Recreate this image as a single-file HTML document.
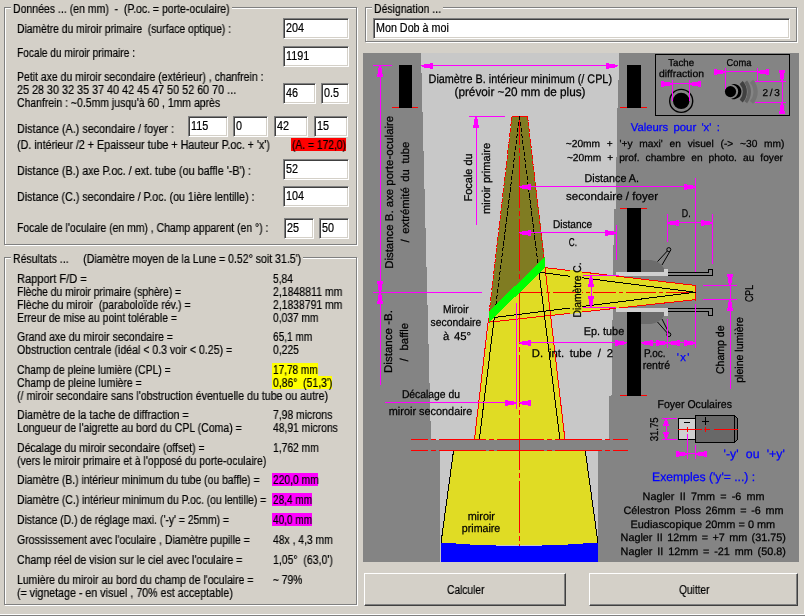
<!DOCTYPE html>
<html><head><meta charset="utf-8"><title>Newton</title>
<style>
html,body{margin:0;padding:0;}
body{width:805px;height:616px;background:#d4d0c8;position:relative;overflow:hidden;font-family:"Liberation Sans",sans-serif;font-size:12px;color:#000;}
.t{position:absolute;white-space:pre;line-height:13px;height:13px;}
.gb{position:absolute;border:1px solid #808080;box-shadow:1px 1px 0 #fff, inset 1px 1px 0 #fff;box-sizing:border-box;}
.gl{position:absolute;background:#d4d0c8;white-space:pre;line-height:13px;height:13px;padding:0 1px;}
.in{position:absolute;box-sizing:border-box;background:#fff;border:1px solid;border-color:#808080 #fff #fff #808080;box-shadow:inset 1px 1px 0 #404040, inset -1px -1px 0 #d4d0c8;height:21px;line-height:13px;padding:3px 0 0 2px;white-space:pre;overflow:hidden;}
.btn{position:absolute;box-sizing:border-box;border:1px solid;border-color:#fff #404040 #404040 #fff;box-shadow:inset -1px -1px 0 #808080;text-align:center;line-height:13px;}
.hl{position:absolute;height:13px;}
svg{position:absolute;left:0;top:0;}
.t,.in,svg{will-change:transform;}
.t,.in{-webkit-text-stroke:0.2px #000;}
svg text{font-family:"Liberation Sans",sans-serif;}
</style></head><body>

<div class="gb" style="left:4px;top:7px;width:353px;height:238px;"></div>
<div style="position:absolute;left:11px;top:3px;width:221px;height:13px;background:#d4d0c8;"></div>
<div class="t" style="left:13px;top:3px;transform:scaleX(0.8752);transform-origin:0 0;">Données ... (en mm)  -  (P.oc. = porte-oculaire)</div>
<div class="gb" style="left:4px;top:257px;width:353px;height:348px;"></div>
<div style="position:absolute;left:11px;top:253px;width:292px;height:13px;background:#d4d0c8;"></div>
<div class="t" style="left:13px;top:253px;transform:scaleX(0.8777);transform-origin:0 0;">Résultats ...     (Diamètre moyen de la Lune = 0.52° soit 31.5')</div>
<div class="gb" style="left:365px;top:7px;width:432px;height:35px;"></div>
<div style="position:absolute;left:372px;top:3px;width:71px;height:13px;background:#d4d0c8;"></div>
<div class="t" style="left:374px;top:3px;transform:scaleX(0.8737);transform-origin:0 0;">Désignation ...</div>
<div class="t" style="left:17px;top:23px;transform:scaleX(0.8604);transform-origin:0 0;">Diamètre du miroir primaire  (surface optique) :</div>
<div class="t" style="left:17px;top:47px;transform:scaleX(0.8466);transform-origin:0 0;">Focale du miroir primaire :</div>
<div class="t" style="left:17px;top:71px;transform:scaleX(0.8715);transform-origin:0 0;">Petit axe du miroir secondaire (extérieur) , chanfrein :</div>
<div class="t" style="left:17px;top:84px;transform:scaleX(0.8998);transform-origin:0 0;">25 28 30 32 35 37 40 42 45 47 50 52 60 70 ...</div>
<div class="t" style="left:17px;top:97px;transform:scaleX(0.8699);transform-origin:0 0;">Chanfrein : ~0.5mm jusqu'à 60 , 1mm après</div>
<div class="t" style="left:17px;top:123px;transform:scaleX(0.8987);transform-origin:0 0;">Distance (A.) secondaire / foyer :</div>
<div class="t" style="left:17px;top:139px;transform:scaleX(0.8919);transform-origin:0 0;">(D. intérieur /2 + Epaisseur tube + Hauteur P.oc. + 'x')</div>
<div class="t" style="left:17px;top:165px;transform:scaleX(0.8972);transform-origin:0 0;">Distance (B.) axe P.oc. / ext. tube (ou baffle '-B') :</div>
<div class="t" style="left:17px;top:191px;transform:scaleX(0.8908);transform-origin:0 0;">Distance (C.) secondaire / P.oc. (ou 1ière lentille) :</div>
<div class="t" style="left:17px;top:222px;transform:scaleX(0.8671);transform-origin:0 0;">Focale de l'oculaire (en mm) , Champ apparent (en °) :</div>
<div class="in" style="left:283px;top:18px;width:66px;height:21px;"><span style="display:inline-block;transform:scaleX(0.9000);transform-origin:0 0;">204</span></div>
<div class="in" style="left:283px;top:46px;width:66px;height:21px;"><span style="display:inline-block;transform:scaleX(0.9000);transform-origin:0 0;">1191</span></div>
<div class="in" style="left:283px;top:83px;width:33px;height:21px;"><span style="display:inline-block;transform:scaleX(0.9000);transform-origin:0 0;">46</span></div>
<div class="in" style="left:321px;top:83px;width:28px;height:21px;"><span style="display:inline-block;transform:scaleX(0.9000);transform-origin:0 0;">0.5</span></div>
<div class="in" style="left:188px;top:116px;width:40px;height:21px;"><span style="display:inline-block;transform:scaleX(0.9000);transform-origin:0 0;">115</span></div>
<div class="in" style="left:233px;top:116px;width:35px;height:21px;"><span style="display:inline-block;transform:scaleX(0.9000);transform-origin:0 0;">0</span></div>
<div class="in" style="left:274px;top:116px;width:34px;height:21px;"><span style="display:inline-block;transform:scaleX(0.9000);transform-origin:0 0;">42</span></div>
<div class="in" style="left:314px;top:116px;width:34px;height:21px;"><span style="display:inline-block;transform:scaleX(0.9000);transform-origin:0 0;">15</span></div>
<div class="in" style="left:283px;top:159px;width:66px;height:21px;"><span style="display:inline-block;transform:scaleX(0.9000);transform-origin:0 0;">52</span></div>
<div class="in" style="left:283px;top:186px;width:66px;height:21px;"><span style="display:inline-block;transform:scaleX(0.9000);transform-origin:0 0;">104</span></div>
<div class="in" style="left:284px;top:218px;width:30px;height:21px;"><span style="display:inline-block;transform:scaleX(0.9000);transform-origin:0 0;">25</span></div>
<div class="in" style="left:319px;top:218px;width:30px;height:21px;"><span style="display:inline-block;transform:scaleX(0.9000);transform-origin:0 0;">50</span></div>
<div class="in" style="left:373px;top:18px;width:417px;height:21px;"><span style="display:inline-block;transform:scaleX(0.8948);transform-origin:0 0;">Mon Dob à moi</span></div>
<div class="hl" style="left:291px;top:138px;width:55px;background:#ff0000;"></div>
<div class="t" style="left:292px;top:139px;transform:scaleX(0.8569);transform-origin:0 0;">(A. = 172,0)</div>
<div class="t" style="left:17px;top:273px;transform:scaleX(0.9209);transform-origin:0 0;">Rapport F/D =</div>
<div class="t" style="left:273px;top:273px;transform:scaleX(0.8482);transform-origin:0 0;">5,84</div>
<div class="t" style="left:17px;top:286px;transform:scaleX(0.8588);transform-origin:0 0;">Flèche du miroir primaire (sphère) =</div>
<div class="t" style="left:273px;top:286px;transform:scaleX(0.8757);transform-origin:0 0;">2,1848811 mm</div>
<div class="t" style="left:17px;top:299px;transform:scaleX(0.8824);transform-origin:0 0;">Flèche du miroir  (paraboloïde rév.) =</div>
<div class="t" style="left:273px;top:299px;transform:scaleX(0.8659);transform-origin:0 0;">2,1838791 mm</div>
<div class="t" style="left:17px;top:312px;transform:scaleX(0.8671);transform-origin:0 0;">Erreur de mise au point tolérable =</div>
<div class="t" style="left:273px;top:312px;transform:scaleX(0.8530);transform-origin:0 0;">0,037 mm</div>
<div class="t" style="left:17px;top:331px;transform:scaleX(0.8733);transform-origin:0 0;">Grand axe du miroir secondaire =</div>
<div class="t" style="left:273px;top:331px;transform:scaleX(0.8399);transform-origin:0 0;">65,1 mm</div>
<div class="t" style="left:17px;top:344px;transform:scaleX(0.8800);transform-origin:0 0;">Obstruction centrale (idéal &lt; 0.3 voir &lt; 0.25) =</div>
<div class="t" style="left:273px;top:344px;transform:scaleX(0.8629);transform-origin:0 0;">0,225</div>
<div class="t" style="left:17px;top:364px;transform:scaleX(0.8609);transform-origin:0 0;">Champ de pleine lumière (CPL) =</div>
<div class="hl" style="left:272px;top:363px;width:46px;background:#ffff00;"></div>
<div class="t" style="left:273px;top:364px;transform:scaleX(0.8380);transform-origin:0 0;">17,78 mm</div>
<div class="t" style="left:17px;top:377px;transform:scaleX(0.8668);transform-origin:0 0;">Champ de pleine lumière =</div>
<div class="hl" style="left:272px;top:376px;width:60px;background:#ffff00;"></div>
<div class="t" style="left:273px;top:377px;transform:scaleX(0.8665);transform-origin:0 0;">0,86°  (51,3')</div>
<div class="t" style="left:17px;top:390px;transform:scaleX(0.8856);transform-origin:0 0;">(/ miroir secondaire sans l'obstruction éventuelle du tube ou autre)</div>
<div class="t" style="left:17px;top:409px;transform:scaleX(0.8893);transform-origin:0 0;">Diamètre de la tache de diffraction =</div>
<div class="t" style="left:273px;top:409px;transform:scaleX(0.8633);transform-origin:0 0;">7,98 microns</div>
<div class="t" style="left:17px;top:422px;transform:scaleX(0.8771);transform-origin:0 0;">Longueur de l'aigrette au bord du CPL (Coma) =</div>
<div class="t" style="left:273px;top:422px;transform:scaleX(0.8599);transform-origin:0 0;">48,91 microns</div>
<div class="t" style="left:17px;top:442px;transform:scaleX(0.8786);transform-origin:0 0;">Décalage du miroir secondaire (offset) =</div>
<div class="t" style="left:273px;top:442px;transform:scaleX(0.8586);transform-origin:0 0;">1,762 mm</div>
<div class="t" style="left:17px;top:455px;transform:scaleX(0.8664);transform-origin:0 0;">(vers le miroir primaire et à l'opposé du porte-oculaire)</div>
<div class="t" style="left:17px;top:474px;transform:scaleX(0.8634);transform-origin:0 0;">Diamètre (B.) intérieur minimum du tube (ou baffle) =</div>
<div class="hl" style="left:272px;top:473px;width:46px;background:#ff00ff;"></div>
<div class="t" style="left:273px;top:474px;transform:scaleX(0.8586);transform-origin:0 0;">220,0 mm</div>
<div class="t" style="left:17px;top:494px;transform:scaleX(0.8630);transform-origin:0 0;">Diamètre (C.) intérieur minimum du P.oc. (ou lentille) =</div>
<div class="hl" style="left:272px;top:493px;width:40px;background:#ff00ff;"></div>
<div class="t" style="left:273px;top:494px;transform:scaleX(0.8356);transform-origin:0 0;">28,4 mm</div>
<div class="t" style="left:17px;top:514px;transform:scaleX(0.8641);transform-origin:0 0;">Distance (D.) de réglage maxi. ('-y' = 25mm) =</div>
<div class="hl" style="left:272px;top:513px;width:40px;background:#ff00ff;"></div>
<div class="t" style="left:273px;top:514px;transform:scaleX(0.8356);transform-origin:0 0;">40,0 mm</div>
<div class="t" style="left:17px;top:534px;transform:scaleX(0.8750);transform-origin:0 0;">Grossissement avec l'oculaire , Diamètre pupille =</div>
<div class="t" style="left:273px;top:534px;transform:scaleX(0.8626);transform-origin:0 0;">48x , 4,3 mm</div>
<div class="t" style="left:17px;top:554px;transform:scaleX(0.8802);transform-origin:0 0;">Champ réel de vision sur le ciel avec l'oculaire =</div>
<div class="t" style="left:273px;top:554px;transform:scaleX(0.8738);transform-origin:0 0;">1,05°  (63,0')</div>
<div class="t" style="left:17px;top:574px;transform:scaleX(0.8731);transform-origin:0 0;">Lumière du miroir au bord du champ de l'oculaire =</div>
<div class="t" style="left:273px;top:574px;transform:scaleX(0.8528);transform-origin:0 0;">~ 79%</div>
<div class="t" style="left:17px;top:587px;transform:scaleX(0.8874);transform-origin:0 0;">(= vignetage - en visuel , 70% est acceptable)</div>
<div class="btn" style="left:364px;top:573px;width:202px;height:33px;"></div>
<div class="btn" style="left:589px;top:573px;width:209px;height:33px;"></div>
<div class="t" style="left:446.5px;top:584px;transform:scaleX(0.8517);transform-origin:0 0;">Calculer</div>
<div class="t" style="left:678.5px;top:584px;transform:scaleX(0.8472);transform-origin:0 0;">Quitter</div>
<div style="position:absolute;left:0;top:614px;width:805px;height:1px;background:#fff;"></div>
<div style="position:absolute;left:804px;top:0;width:1px;height:615px;background:#fff;"></div>
<div style="position:absolute;left:0;top:615px;width:805px;height:1px;background:#808080;"></div>
<svg width="805" height="616" viewBox="0 0 805 616" shape-rendering="crispEdges" text-rendering="geometricPrecision">
<rect x="363" y="53" width="436" height="509" fill="#848484"/>
<polygon points="421,53 619,53 618,107.5 617,107.5 616,208.5 614,208.5 611.5,395.5 609,395.5 608.5,440 431,440" fill="#c8c8c8"/>
<rect x="440" y="451" width="158" height="111" fill="#c8c8c8"/>
<polygon points="512,116 527.5,116 544.7,258 489.3,312.5" fill="#807c22"/>
<polygon points="489,321.5 545,266 565,440 474.5,440" fill="#e0dc24"/>
<polygon points="545,267.6 696,285.5 696,300 488.7,322.5 540,270" fill="#e0dc24"/>
<polygon points="453.5,451 585.3,451 598,545 441,545" fill="#e0dc24"/>
<path d="M441,542.5 Q519.5,549.5 598,542.5 L598,562 L441,562 Z" fill="#0000ff"/>
<line x1="512" y1="116.5" x2="527.5" y2="116.5" stroke="#ff0000" stroke-width="1"/>
<line x1="511.883950617284" y1="117" x2="489.13827160493827" y2="313" stroke="#ff0000" stroke-width="1" stroke-dasharray="4 1.5"/>
<line x1="488.558024691358" y1="318" x2="474.516049382716" y2="439" stroke="#ff0000" stroke-width="1"/>
<line x1="527.6157407407408" y1="117" x2="544.050925925926" y2="259" stroke="#ff0000" stroke-width="1" stroke-dasharray="4 1.5"/>
<line x1="544.3981481481482" y1="262" x2="564.8842592592592" y2="439" stroke="#ff0000" stroke-width="1"/>
<line x1="545" y1="267.6" x2="695.7" y2="285.5" stroke="#ff0000" stroke-width="1"/>
<line x1="488.7" y1="322.2" x2="695.7" y2="299.6" stroke="#ff0000" stroke-width="1"/>
<line x1="695.5" y1="285" x2="695.5" y2="300.5" stroke="#ff0000" stroke-width="1"/>
<line x1="519.5" y1="117" x2="519.5" y2="292" stroke="#ff0000" stroke-width="1" stroke-dasharray="28 3 5 3 52 3 5 3 52 3 5 3 52"/>
<line x1="519.5" y1="292" x2="519.5" y2="546" stroke="#ff0000" stroke-width="1" stroke-dasharray="52 3 5 3"/>
<line x1="519.5" y1="292.5" x2="696" y2="292.5" stroke="#ff0000" stroke-width="1" stroke-dasharray="23 3 4 3 30 3 4 3"/>
<line x1="519.5" y1="116" x2="494.3" y2="317.5" stroke="#000000" stroke-width="1" stroke-dasharray="4.5 1.5"/>
<line x1="519.5" y1="116" x2="538.6" y2="269" stroke="#000000" stroke-width="1" stroke-dasharray="4.5 1.5"/>
<line x1="494.3" y1="317.5" x2="479.4" y2="439" stroke="#000000" stroke-width="1"/>
<line x1="538.6" y1="269" x2="559.9" y2="439" stroke="#000000" stroke-width="1"/>
<line x1="539.3" y1="272.3" x2="695.7" y2="292.3" stroke="#000000" stroke-width="1"/>
<line x1="494.3" y1="317.5" x2="695.7" y2="292.2" stroke="#000000" stroke-width="1"/>
<line x1="453.5" y1="451" x2="441" y2="543" stroke="#000000" stroke-width="1"/>
<line x1="585.3" y1="451" x2="598" y2="543" stroke="#000000" stroke-width="1"/>
<polygon points="570,270.1 582.3,271.5 582.3,312.5 570,313.8" fill="#e0dc24"/>
<line x1="570" y1="292.5" x2="580" y2="292.5" stroke="#ff0000" stroke-width="1"/>
<line x1="411" y1="439.5" x2="628" y2="439.5" stroke="#ff0000" stroke-width="1" stroke-dasharray="17 3 5 3 47 3 5 3 47 3 5 3 47 3 5 3 15"/>
<line x1="411" y1="450.5" x2="628" y2="450.5" stroke="#ff0000" stroke-width="1" stroke-dasharray="17 3 5 3 47 3 5 3 47 3 5 3 47 3 5 3 15"/>
<polygon points="489.3,311.2 544.6,257 545.3,267.3 489,322.5" fill="#00ff00"/>
<line x1="392" y1="107.5" x2="418" y2="107.5" stroke="#ff0000" stroke-width="1"/>
<rect x="399" y="65" width="13" height="43" fill="#000000"/>
<line x1="620" y1="107.5" x2="647" y2="107.5" stroke="#ff0000" stroke-width="1"/>
<rect x="627" y="65" width="14" height="43" fill="#000000"/>
<line x1="620" y1="208.5" x2="647" y2="208.5" stroke="#ff0000" stroke-width="1"/>
<rect x="627" y="208" width="14" height="64" fill="#000000"/>
<line x1="620" y1="395.5" x2="647" y2="395.5" stroke="#ff0000" stroke-width="1"/>
<rect x="627" y="312" width="14" height="84" fill="#000000"/>
<path d="M641,260 H651 Q660,261 664.5,269 V272 H641 Z" fill="#6c6c6c" shape-rendering="auto"/>
<path d="M641,324 H651 Q660,323 664.5,315 V312 H641 Z" fill="#6c6c6c" shape-rendering="auto"/>
<rect x="616" y="272" width="52" height="4" fill="#d0d0d0"/>
<rect x="664" y="269" width="4" height="7" fill="#d0d0d0"/>
<rect x="616" y="308" width="52" height="4" fill="#d0d0d0"/>
<rect x="664" y="308" width="4" height="8" fill="#d0d0d0"/>
<path d="M668,272.5 H708.5 V269.5 H712.5 V275.5 H668" fill="none" stroke="#000000"/>
<path d="M668,311.5 H708.5 V315.5 H712.5 V308.5 H668" fill="none" stroke="#000000"/>
<g shape-rendering="auto" fill="none" stroke="#000000" stroke-width="1">
<circle cx="668.8" cy="249.6" r="2"/><line x1="667.3" y1="251" x2="657.5" y2="261.6"/><line x1="669.8" y1="251.6" x2="662" y2="265"/>
<circle cx="668.8" cy="334.6" r="2"/><line x1="667.3" y1="333" x2="657.5" y2="322"/><line x1="668.6" y1="332.3" x2="662" y2="319"/>
</g>
<line x1="373" y1="65.5" x2="392" y2="65.5" stroke="#ff00ff" stroke-width="1"/>
<line x1="380.5" y1="65" x2="380.5" y2="385" stroke="#ff00ff" stroke-width="1"/>
<path d="M379,66h2v2h-2zM378,68h4v6h-4zM377,74h6v3h-6z" fill="#ff00ff"/>
<line x1="373" y1="292.5" x2="482" y2="292.5" stroke="#ff00ff" stroke-width="1"/>
<path d="M379,290h2v2h-2zM378,284h4v6h-4zM377,281h6v3h-6z" fill="#ff00ff"/>
<path d="M379,293h2v2h-2zM378,295h4v6h-4zM377,301h6v3h-6z" fill="#ff00ff"/>
<line x1="421" y1="65.5" x2="618" y2="65.5" stroke="#ff00ff" stroke-width="1"/>
<path d="M422,65h2v2h-2zM424,64h6v4h-6zM430,63h3v6h-3z" fill="#ff00ff"/>
<path d="M615,65h2v2h-2zM609,64h6v4h-6zM606,63h3v6h-3z" fill="#ff00ff"/>
<line x1="469" y1="116.5" x2="505" y2="116.5" stroke="#ff00ff" stroke-width="1"/>
<line x1="476.5" y1="116" x2="476.5" y2="225" stroke="#ff00ff" stroke-width="1"/>
<path d="M475,117h2v2h-2zM474,119h4v6h-4zM473,125h6v3h-6z" fill="#ff00ff"/>
<line x1="519" y1="186.5" x2="695" y2="186.5" stroke="#ff00ff" stroke-width="1"/>
<path d="M520,186h2v2h-2zM522,185h6v4h-6zM528,184h3v6h-3z" fill="#ff00ff"/>
<path d="M693,186h2v2h-2zM687,185h6v4h-6zM684,184h3v6h-3z" fill="#ff00ff"/>
<line x1="695.5" y1="178" x2="695.5" y2="272" stroke="#ff00ff" stroke-width="1"/>
<line x1="695.5" y1="304" x2="695.5" y2="348" stroke="#ff00ff" stroke-width="1"/>
<line x1="519" y1="232.5" x2="616" y2="232.5" stroke="#ff00ff" stroke-width="1"/>
<path d="M520,232h2v2h-2zM522,231h6v4h-6zM528,230h3v6h-3z" fill="#ff00ff"/>
<path d="M614,232h2v2h-2zM608,231h6v4h-6zM605,230h3v6h-3z" fill="#ff00ff"/>
<line x1="616.5" y1="225" x2="616.5" y2="260" stroke="#ff00ff" stroke-width="1"/>
<line x1="667" y1="222.5" x2="713" y2="222.5" stroke="#ff00ff" stroke-width="1"/>
<path d="M668,222h2v2h-2zM670,221h6v4h-6zM676,220h3v6h-3z" fill="#ff00ff"/>
<path d="M710,222h2v2h-2zM704,221h6v4h-6zM701,220h3v6h-3z" fill="#ff00ff"/>
<line x1="667.5" y1="214" x2="667.5" y2="242" stroke="#ff00ff" stroke-width="1"/>
<line x1="712.5" y1="214" x2="712.5" y2="264" stroke="#ff00ff" stroke-width="1"/>
<line x1="591.5" y1="275" x2="591.5" y2="308" stroke="#ff00ff" stroke-width="1"/>
<line x1="583" y1="275.5" x2="619" y2="275.5" stroke="#ff00ff" stroke-width="1"/>
<line x1="583" y1="307.5" x2="616" y2="307.5" stroke="#ff00ff" stroke-width="1"/>
<path d="M590,276h2v2h-2zM589,278h4v6h-4zM588,284h6v3h-6z" fill="#ff00ff"/>
<path d="M590,305h2v2h-2zM589,299h4v6h-4zM588,296h6v3h-6z" fill="#ff00ff"/>
<line x1="519" y1="342.5" x2="627" y2="342.5" stroke="#ff00ff" stroke-width="1"/>
<path d="M520,342h2v2h-2zM522,341h6v4h-6zM528,340h3v6h-3z" fill="#ff00ff"/>
<path d="M624,342h2v2h-2zM618,341h6v4h-6zM615,340h3v6h-3z" fill="#ff00ff"/>
<line x1="516.5" y1="303" x2="516.5" y2="409" stroke="#ff00ff" stroke-width="1"/>
<line x1="641" y1="342.5" x2="696" y2="342.5" stroke="#ff00ff" stroke-width="1"/>
<path d="M642,342h2v2h-2zM644,341h6v4h-6zM650,340h3v6h-3z" fill="#ff00ff"/>
<path d="M665,342h2v2h-2zM659,341h6v4h-6zM656,340h3v6h-3z" fill="#ff00ff"/>
<path d="M669,342h2v2h-2zM671,341h6v4h-6zM677,340h3v6h-3z" fill="#ff00ff"/>
<path d="M693,342h2v2h-2zM687,341h6v4h-6zM684,340h3v6h-3z" fill="#ff00ff"/>
<line x1="667.5" y1="319" x2="667.5" y2="348" stroke="#ff00ff" stroke-width="1"/>
<line x1="385" y1="402.5" x2="517" y2="402.5" stroke="#ff00ff" stroke-width="1"/>
<path d="M514,402h2v2h-2zM508,401h6v4h-6zM505,400h3v6h-3z" fill="#ff00ff"/>
<path d="M520,402h2v2h-2zM522,401h6v4h-6zM528,400h3v6h-3z" fill="#ff00ff"/>
<line x1="519" y1="402.5" x2="530" y2="402.5" stroke="#ff00ff" stroke-width="1"/>
<line x1="703" y1="285.5" x2="737" y2="285.5" stroke="#ff00ff" stroke-width="1"/>
<line x1="703" y1="299.5" x2="737" y2="299.5" stroke="#ff00ff" stroke-width="1"/>
<line x1="730.5" y1="274" x2="730.5" y2="389" stroke="#ff00ff" stroke-width="1"/>
<path d="M729,283h2v2h-2zM728,277h4v6h-4zM727,274h6v3h-6z" fill="#ff00ff"/>
<path d="M729,300h2v2h-2zM728,302h4v6h-4zM727,308h6v3h-6z" fill="#ff00ff"/>
<rect x="655.5" y="54.5" width="134" height="61" fill="none" stroke="#000000"/>
<g shape-rendering="auto">
<circle cx="681.2" cy="100.9" r="11.5" fill="none" stroke="#000000" stroke-width="1.4"/><circle cx="681.2" cy="100.9" r="8.2" fill="#000000"/>
<path d="M751.50,81.20 A15.75,15.75 0 0 1 751.50,102.40" fill="none" stroke="#747474" stroke-width="4.3"/>
<path d="M745.80,81.40 A17.20,17.20 0 0 1 745.80,102.20" fill="none" stroke="#626262" stroke-width="3.3"/>
<path d="M741.20,82.50 A13.67,13.67 0 0 1 741.20,101.10" fill="none" stroke="#404040" stroke-width="4.1"/>
<path d="M731.1,84.5 A7.6,7.6 0 1 1 731.1,98.7 A7.1,7.1 0 0 0 731.1,84.5 Z" fill="#000000"/>
<circle cx="730.5" cy="91.6" r="5.6" fill="#000000"/>
</g>
<line x1="662" y1="83.5" x2="701" y2="83.5" stroke="#ff00ff" stroke-width="1"/>
<line x1="672.5" y1="80" x2="672.5" y2="101" stroke="#ff00ff" stroke-width="1"/>
<line x1="689.5" y1="80" x2="689.5" y2="101" stroke="#ff00ff" stroke-width="1"/>
<path d="M670,83h2v2h-2zM664,82h6v4h-6zM661,81h3v6h-3z" fill="#ff00ff"/>
<path d="M690,83h2v2h-2zM692,82h6v4h-6zM698,81h3v6h-3z" fill="#ff00ff"/>
<line x1="715" y1="71.5" x2="768" y2="71.5" stroke="#ff00ff" stroke-width="1"/>
<line x1="725.5" y1="68" x2="725.5" y2="89" stroke="#ff00ff" stroke-width="1"/>
<line x1="757.5" y1="68" x2="757.5" y2="81" stroke="#ff00ff" stroke-width="1"/>
<path d="M723,71h2v2h-2zM717,70h6v4h-6zM714,69h3v6h-3z" fill="#ff00ff"/>
<path d="M758,71h2v2h-2zM760,70h6v4h-6zM766,69h3v6h-3z" fill="#ff00ff"/>
<line x1="755" y1="81.5" x2="786" y2="81.5" stroke="#ff00ff" stroke-width="1"/>
<line x1="755" y1="102.5" x2="786" y2="102.5" stroke="#ff00ff" stroke-width="1"/>
<line x1="782.5" y1="70" x2="782.5" y2="113" stroke="#ff00ff" stroke-width="1"/>
<path d="M781,79h2v2h-2zM780,73h4v6h-4zM779,70h6v3h-6z" fill="#ff00ff"/>
<path d="M781,103h2v2h-2zM780,105h4v6h-4zM779,111h6v3h-6z" fill="#ff00ff"/>
<rect x="678.5" y="418.5" width="17" height="21" fill="#d0d0d0" stroke="#000000"/>
<path d="M695.5,415.5 H734.5 L737.5,418.5 V439.5 L734.5,442.5 H695.5 Z" fill="#686868" stroke="#000000"/>
<line x1="734.5" y1="416" x2="734.5" y2="442" stroke="#000000" stroke-width="1"/>
<line x1="678" y1="429.5" x2="702" y2="429.5" stroke="#ff0000" stroke-width="1"/>
<line x1="704" y1="429.5" x2="710" y2="429.5" stroke="#ff0000" stroke-width="1"/>
<line x1="714" y1="429.5" x2="738" y2="429.5" stroke="#ff0000" stroke-width="1"/>
<line x1="687.5" y1="427" x2="687.5" y2="432" stroke="#ff0000" stroke-width="1"/>
<line x1="705.5" y1="427" x2="705.5" y2="432" stroke="#ff0000" stroke-width="1"/>
<line x1="662" y1="418.5" x2="677" y2="418.5" stroke="#ff00ff" stroke-width="1"/>
<line x1="662" y1="439.5" x2="677" y2="439.5" stroke="#ff00ff" stroke-width="1"/>
<line x1="666.5" y1="418" x2="666.5" y2="439" stroke="#ff00ff" stroke-width="1"/>
<path d="M665,419h2v2h-2zM664,421h4v3h-4zM663,424h6v2h-6z" fill="#ff00ff"/>
<path d="M665,437h2v2h-2zM664,434h4v3h-4zM663,432h6v2h-6z" fill="#ff00ff"/>
<line x1="687.5" y1="434" x2="687.5" y2="459" stroke="#ff00ff" stroke-width="1"/>
<line x1="695.5" y1="445" x2="695.5" y2="459" stroke="#ff00ff" stroke-width="1"/>
<line x1="676" y1="453.5" x2="707" y2="453.5" stroke="#ff00ff" stroke-width="1"/>
<path d="M685,453h2v2h-2zM679,452h6v4h-6zM676,451h3v6h-3z" fill="#ff00ff"/>
<path d="M696,453h2v2h-2zM698,452h6v4h-6zM704,451h3v6h-3z" fill="#ff00ff"/>
<line x1="684" y1="422.5" x2="690" y2="422.5" stroke="#000000" stroke-width="1"/>
<line x1="702" y1="421.5" x2="709" y2="421.5" stroke="#000000" stroke-width="1"/>
<line x1="705.5" y1="417" x2="705.5" y2="425" stroke="#000000" stroke-width="1"/>
<g shape-rendering="auto">
<text x="428.6" y="82.8" font-size="12.4" fill="#000000" stroke="#000000" stroke-width="0.25" textLength="183.4" lengthAdjust="spacingAndGlyphs" xml:space="preserve">Diamètre B. intérieur minimum (/ CPL)</text>
<text x="454.5" y="95.8" font-size="12.4" fill="#000000" stroke="#000000" stroke-width="0.25" textLength="131.0" lengthAdjust="spacingAndGlyphs" xml:space="preserve">(prévoir ~20 mm de plus)</text>
<text x="630.8" y="130.5" font-size="11.3" fill="#0000ff" stroke="#0000ff" stroke-width="0.25" style="word-spacing:2.13px" textLength="89.0" lengthAdjust="spacingAndGlyphs" xml:space="preserve">Valeurs pour 'x' :</text>
<text x="565.8" y="147.2" font-size="10.2" fill="#000000" stroke="#000000" stroke-width="0.25" style="word-spacing:3.93px" textLength="218.7" lengthAdjust="spacingAndGlyphs" xml:space="preserve">~20mm + '+y maxi' en visuel (-&gt; ~30 mm)</text>
<text x="566.9" y="161" font-size="10.2" fill="#000000" stroke="#000000" stroke-width="0.25" style="word-spacing:3.17px" textLength="216.1" lengthAdjust="spacingAndGlyphs" xml:space="preserve">~20mm + prof. chambre en photo. au foyer</text>
<text x="584.6" y="181.5" font-size="11.3" fill="#000000" stroke="#000000" stroke-width="0.25" textLength="54.4" lengthAdjust="spacingAndGlyphs" xml:space="preserve">Distance A.</text>
<text x="566" y="199.6" font-size="11.3" fill="#000000" stroke="#000000" stroke-width="0.25" textLength="92.0" lengthAdjust="spacingAndGlyphs" xml:space="preserve">secondaire / foyer</text>
<text x="552.9" y="228" font-size="11.3" fill="#000000" stroke="#000000" stroke-width="0.25" textLength="39.3" lengthAdjust="spacingAndGlyphs" xml:space="preserve">Distance</text>
<text x="568.8" y="245.7" font-size="11.3" fill="#000000" stroke="#000000" stroke-width="0.25" textLength="8.2" lengthAdjust="spacingAndGlyphs" xml:space="preserve">C.</text>
<text x="681.8" y="217" font-size="11.3" fill="#000000" stroke="#000000" stroke-width="0.25" textLength="8.8" lengthAdjust="spacingAndGlyphs" xml:space="preserve">D.</text>
<text x="443" y="312.9" font-size="11.3" fill="#000000" stroke="#000000" stroke-width="0.25" textLength="25.6" lengthAdjust="spacingAndGlyphs" xml:space="preserve">Miroir</text>
<text x="430.6" y="326.3" font-size="11.3" fill="#000000" stroke="#000000" stroke-width="0.25" textLength="50.7" lengthAdjust="spacingAndGlyphs" xml:space="preserve">secondaire</text>
<text x="443" y="339.5" font-size="11.3" fill="#000000" stroke="#000000" stroke-width="0.25" style="word-spacing:1.49px" textLength="28.0" lengthAdjust="spacingAndGlyphs" xml:space="preserve">à 45°</text>
<text x="583.7" y="335.2" font-size="11.3" fill="#000000" stroke="#000000" stroke-width="0.25" textLength="40.5" lengthAdjust="spacingAndGlyphs" xml:space="preserve">Ep. tube</text>
<text x="531.8" y="356.7" font-size="11.3" fill="#000000" stroke="#000000" stroke-width="0.25" style="word-spacing:2.71px" textLength="81.2" lengthAdjust="spacingAndGlyphs" xml:space="preserve">D. int. tube / 2</text>
<text x="644" y="357.3" font-size="11.3" fill="#000000" stroke="#000000" stroke-width="0.25" textLength="21.5" lengthAdjust="spacingAndGlyphs" xml:space="preserve">P.oc.</text>
<text x="642.7" y="369.4" font-size="11.3" fill="#000000" stroke="#000000" stroke-width="0.25" textLength="27.5" lengthAdjust="spacingAndGlyphs" xml:space="preserve">rentré</text>
<text x="676.7" y="360.6" font-size="11.3" fill="#0000ff" stroke="#0000ff" stroke-width="0.25" textLength="12.7" lengthAdjust="spacing" xml:space="preserve">'x'</text>
<text x="401.9" y="397.6" font-size="11.3" fill="#000000" stroke="#000000" stroke-width="0.25" textLength="58.1" lengthAdjust="spacingAndGlyphs" xml:space="preserve">Décalage du</text>
<text x="388.8" y="414.8" font-size="11.3" fill="#000000" stroke="#000000" stroke-width="0.25" textLength="83.5" lengthAdjust="spacingAndGlyphs" xml:space="preserve">miroir secondaire</text>
<text x="467.8" y="519.7" font-size="11.3" fill="#000000" stroke="#000000" stroke-width="0.25" textLength="27.2" lengthAdjust="spacingAndGlyphs" xml:space="preserve">miroir</text>
<text x="461.8" y="532" font-size="11.3" fill="#000000" stroke="#000000" stroke-width="0.25" textLength="38.5" lengthAdjust="spacingAndGlyphs" xml:space="preserve">primaire</text>
<text x="657.5" y="407.9" font-size="11.3" fill="#000000" stroke="#000000" stroke-width="0.25" textLength="74.5" lengthAdjust="spacingAndGlyphs" xml:space="preserve">Foyer Oculaires</text>
<text x="723.6" y="457.7" font-size="12.3" fill="#0000ff" stroke="#0000ff" stroke-width="0.25" style="word-spacing:3.86px" textLength="61.2" lengthAdjust="spacingAndGlyphs" xml:space="preserve">'-y' ou '+y'</text>
<text x="652" y="480.6" font-size="12.3" fill="#0000ff" stroke="#0000ff" stroke-width="0.25" textLength="103.2" lengthAdjust="spacingAndGlyphs" xml:space="preserve">Exemples ('y'= ...) :</text>
<text x="642.6" y="500" font-size="10.8" fill="#000000" stroke="#000000" stroke-width="0.25" style="word-spacing:2.26px" textLength="122.0" lengthAdjust="spacingAndGlyphs" xml:space="preserve">Nagler II 7mm = -6 mm</text>
<text x="623.5" y="513.7" font-size="10.8" fill="#000000" stroke="#000000" stroke-width="0.25" style="word-spacing:1.69px" textLength="160.0" lengthAdjust="spacingAndGlyphs" xml:space="preserve">Célestron Ploss 26mm = -6 mm</text>
<text x="630.5" y="528" font-size="10.8" fill="#000000" stroke="#000000" stroke-width="0.25" textLength="144.7" lengthAdjust="spacingAndGlyphs" xml:space="preserve">Eudiascopique 20mm = 0 mm</text>
<text x="620.6" y="541.4" font-size="10.8" fill="#000000" stroke="#000000" stroke-width="0.25" style="word-spacing:1.43px" textLength="165.2" lengthAdjust="spacingAndGlyphs" xml:space="preserve">Nagler II 12mm = +7 mm (31.75)</text>
<text x="620.6" y="555" font-size="10.8" fill="#000000" stroke="#000000" stroke-width="0.25" style="word-spacing:1.88px" textLength="165.2" lengthAdjust="spacingAndGlyphs" xml:space="preserve">Nagler II 12mm = -21 mm (50.8)</text>
<text x="668.2" y="66" font-size="10" fill="#000000" stroke="#000000" stroke-width="0.25" textLength="26.0" lengthAdjust="spacingAndGlyphs" xml:space="preserve">Tache</text>
<text x="659" y="77" font-size="10" fill="#000000" stroke="#000000" stroke-width="0.25" textLength="45.0" lengthAdjust="spacingAndGlyphs" xml:space="preserve">diffraction</text>
<text x="726.6" y="66" font-size="10" fill="#000000" stroke="#000000" stroke-width="0.25" textLength="24.8" lengthAdjust="spacingAndGlyphs" xml:space="preserve">Coma</text>
<text x="762.6" y="96.3" font-size="10" fill="#000000" stroke="#000000" stroke-width="0.25" textLength="17.2" lengthAdjust="spacing" xml:space="preserve">2/3</text>
<text transform="translate(393,268.8) rotate(-90)" x="0" y="0" font-size="11.3" fill="#000000" stroke="#000000" stroke-width="0.25" textLength="153.0" lengthAdjust="spacingAndGlyphs" xml:space="preserve">Distance B. axe porte-oculaire</text>
<text transform="translate(408.6,242.5) rotate(-90)" x="0" y="0" font-size="11.3" fill="#000000" stroke="#000000" stroke-width="0.25" style="word-spacing:2.44px" textLength="100.9" lengthAdjust="spacingAndGlyphs" xml:space="preserve">/ extrémité du tube</text>
<text transform="translate(472,201.5) rotate(-90)" x="0" y="0" font-size="11.3" fill="#000000" stroke="#000000" stroke-width="0.25" textLength="48.2" lengthAdjust="spacingAndGlyphs" xml:space="preserve">Focale du</text>
<text transform="translate(490,214) rotate(-90)" x="0" y="0" font-size="11.3" fill="#000000" stroke="#000000" stroke-width="0.25" textLength="71.1" lengthAdjust="spacingAndGlyphs" xml:space="preserve">miroir primaire</text>
<text transform="translate(392.4,373) rotate(-90)" x="0" y="0" font-size="11.3" fill="#000000" stroke="#000000" stroke-width="0.25" textLength="63.0" lengthAdjust="spacingAndGlyphs" xml:space="preserve">Distance -B.</text>
<text transform="translate(407.8,361.5) rotate(-90)" x="0" y="0" font-size="11.3" fill="#000000" stroke="#000000" stroke-width="0.25" style="word-spacing:4.79px" textLength="38.5" lengthAdjust="spacingAndGlyphs" xml:space="preserve">/ baffle</text>
<text transform="translate(581,317.5) rotate(-90)" x="0" y="0" font-size="11.3" fill="#000000" stroke="#000000" stroke-width="0.25" textLength="55.1" lengthAdjust="spacingAndGlyphs" xml:space="preserve">Diamètre C.</text>
<text transform="translate(753,302) rotate(-90)" x="0" y="0" font-size="11.3" fill="#000000" stroke="#000000" stroke-width="0.25" textLength="17.0" lengthAdjust="spacingAndGlyphs" xml:space="preserve">CPL</text>
<text transform="translate(724,374) rotate(-90)" x="0" y="0" font-size="11.3" fill="#000000" stroke="#000000" stroke-width="0.25" textLength="48.5" lengthAdjust="spacingAndGlyphs" xml:space="preserve">Champ de</text>
<text transform="translate(743,382.8) rotate(-90)" x="0" y="0" font-size="11.3" fill="#000000" stroke="#000000" stroke-width="0.25" textLength="65.8" lengthAdjust="spacingAndGlyphs" xml:space="preserve">pleine lumière</text>
<text transform="translate(658.3,441.3) rotate(-90)" x="0" y="0" font-size="11.3" fill="#000000" stroke="#000000" stroke-width="0.25" textLength="23.9" lengthAdjust="spacingAndGlyphs" xml:space="preserve">31.75</text>
</g>
</svg>
</body></html>
